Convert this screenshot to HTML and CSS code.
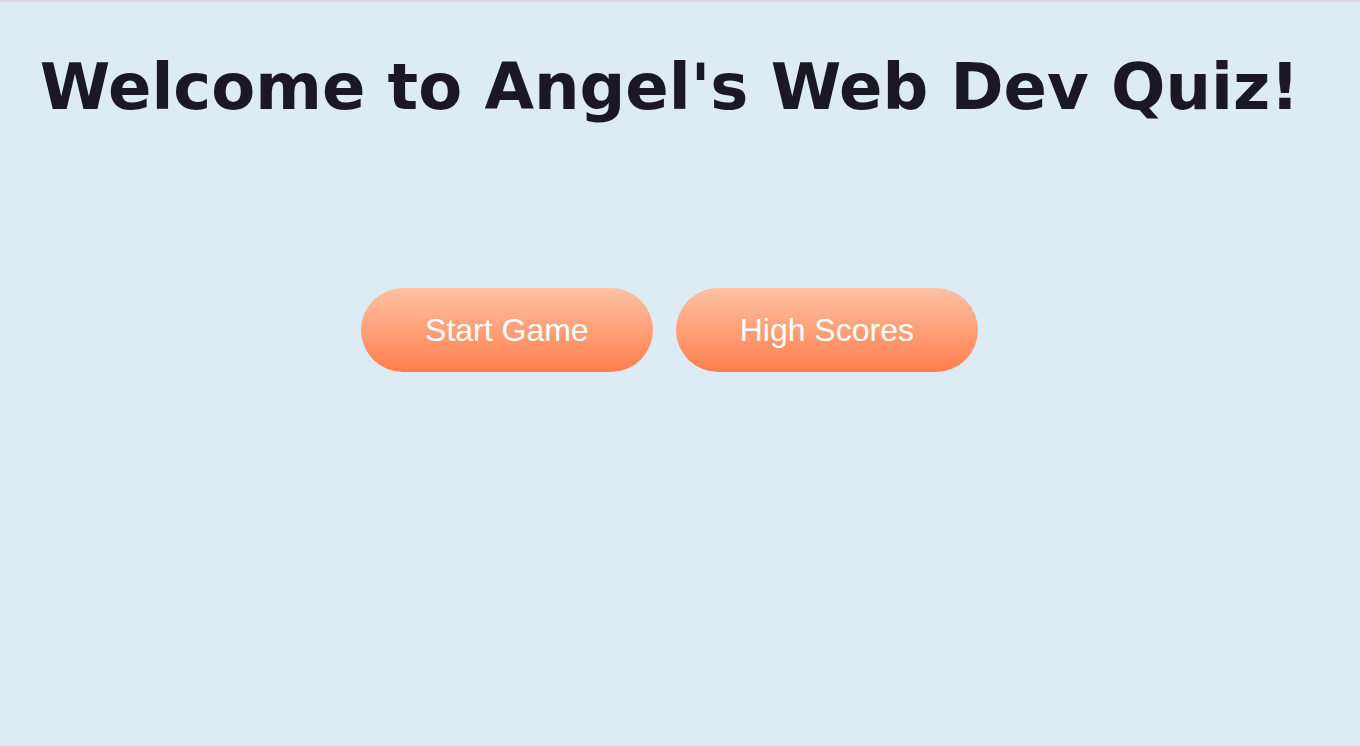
FILE: index.html
```html
<!DOCTYPE html>
<html lang="en">
<head>
<meta charset="utf-8">
<title>Angel's Web Dev Quiz</title>
<link rel="stylesheet" href="styles.css">
</head>
<body>
<main class="page">
  <h1 class="title">Welcome to Angel's Web Dev Quiz!</h1>
  <div class="actions">
    <button class="btn" type="button">Start Game</button>
    <button class="btn" type="button">High Scores</button>
  </div>
</main>
</body>
</html>
```
FILE: styles.css
```css
html, body {
  margin: 0;
  padding: 0;
}
body {
  background: #dcebf4;
  border-top: 2px solid #d6dadd;
  min-height: 744px;
  font-family: "DejaVu Sans", Verdana, sans-serif;
}
.page {
  width: 1339px;
  display: flex;
  flex-direction: column;
  align-items: center;
}
.title {
  margin: 40px 0 0;
  font-size: 64px;
  font-weight: bold;
  line-height: 90px;
  color: #1a1824;
  white-space: nowrap;
}
.actions {
  margin-top: 156px;
  display: flex;
  gap: 23px;
}
.btn {
  font-family: "Liberation Sans", Arial, sans-serif;
  font-size: 32px;
  line-height: 38px;
  color: #ffffff;
  padding: 23px 64px;
  border: none;
  border-radius: 42px;
  background: linear-gradient(to bottom, #ffc2a4, #ff7e4c);
  cursor: pointer;
}
```
